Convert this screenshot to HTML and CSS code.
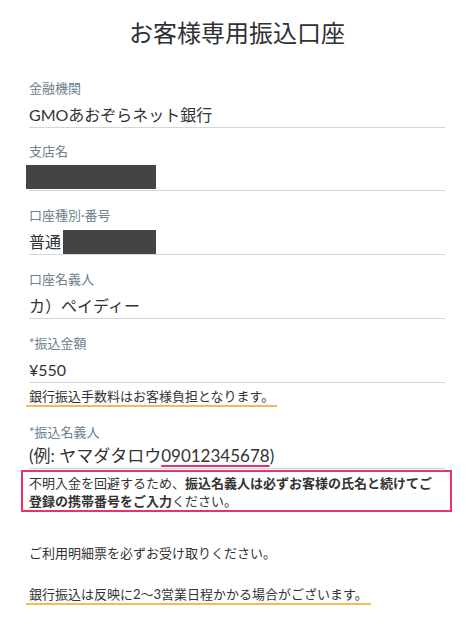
FILE: index.html
```html
<!DOCTYPE html>
<html lang="ja">
<head>
<meta charset="utf-8">
<title>お客様専用振込口座</title>
<link rel="stylesheet" href="styles.css">
</head>
<body>
<main class="page">
  <h1 class="title">お客様専用振込口座</h1>

  <section class="field field-first">
    <div class="label">金融機関</div>
    <div class="value">GMOあおぞらネット銀行</div>
  </section>

  <section class="field field-second">
    <div class="label">支店名</div>
    <div class="value"><span class="mask mask-branch"></span></div>
  </section>

  <section class="field">
    <div class="label">口座種別·番号</div>
    <div class="value">普通<span class="mask mask-number"></span></div>
  </section>

  <section class="field">
    <div class="label">口座名義人</div>
    <div class="value">カ）ペイディー</div>
  </section>

  <section class="field">
    <div class="label">*振込金額</div>
    <div class="value">¥550</div>
  </section>
  <p class="note"><span class="mark">銀行振込手数料はお客様負担となります。</span></p>

  <section class="field field-name">
    <div class="label">*振込名義人</div>
    <div class="value value-lg">(例: ヤマダタロウ<span class="phone">09012345678</span>)</div>
  </section>
  <div class="alert">不明入金を回避するため、<b>振込名義人は必ずお客様の氏名と続けてご登録の携帯番号をご入力</b>ください。</div>

  <p class="plain">ご利用明細票を必ずお受け取りください。</p>
  <p class="note note-last"><span class="mark">銀行振込は反映に2〜3営業日程かかる場合がございます。</span></p>
</main>
</body>
</html>
```

FILE: styles.css
```css
* { box-sizing: border-box; }

body {
  margin: 0;
  background: #ffffff;
  color: #333333;
  font-family: Lato, "Noto Sans CJK JP", sans-serif;
}

.page {
  padding: 0 29px;
}

.title {
  margin: 0;
  padding-top: 17px;
  font-size: 24px;
  line-height: 32px;
  font-weight: 400;
  text-align: center;
  color: #2f3235;
}

.field {
  margin-top: 15px;
  border-bottom: 1px solid #cdd8de;
}

.field-first {
  margin-top: 30px;
}

.field-second {
  margin-top: 14px;
}

.label {
  font-size: 13px;
  line-height: 18px;
  color: #6d818d;
}

.value {
  margin-top: 6px;
  font-size: 16px;
  line-height: 24px;
  height: 24px;
  color: #333333;
  display: flex;
  align-items: center;
}

.mask {
  display: inline-block;
  background: #444444;
  height: 24px;
}

.mask-branch {
  width: 130px;
  margin-left: -3px;
  margin-top: -3px;
}

.mask-number {
  width: 93px;
  margin-left: 2px;
}

.value-lg {
  margin-top: 3px;
  font-size: 17px;
}

.phone {
  text-decoration: underline;
  text-decoration-color: #e6336f;
  text-decoration-thickness: 2px;
  text-underline-offset: 3px;
}

.note {
  display: flex;
  margin: 4px 0 0;
  font-size: 13px;
  line-height: 18px;
  color: #333333;
}

.mark {
  display: block;
  margin-left: -3px;
  padding: 0 3px;
  border-bottom: 2px solid #f6b85a;
}

.field-name {
  margin-top: 16px;
}

.alert {
  margin: 1px -7px 0 -8px;
  padding: 2px 12px 0 6px;
  border: 2px solid #e6336f;
  font-size: 13px;
  line-height: 18px;
  color: #333333;
}

.alert b {
  font-weight: 700;
}

.plain {
  margin: 32px 0 0;
  font-size: 13px;
  line-height: 18px;
  color: #333333;
}

.note-last {
  margin-top: 23px;
}
```
